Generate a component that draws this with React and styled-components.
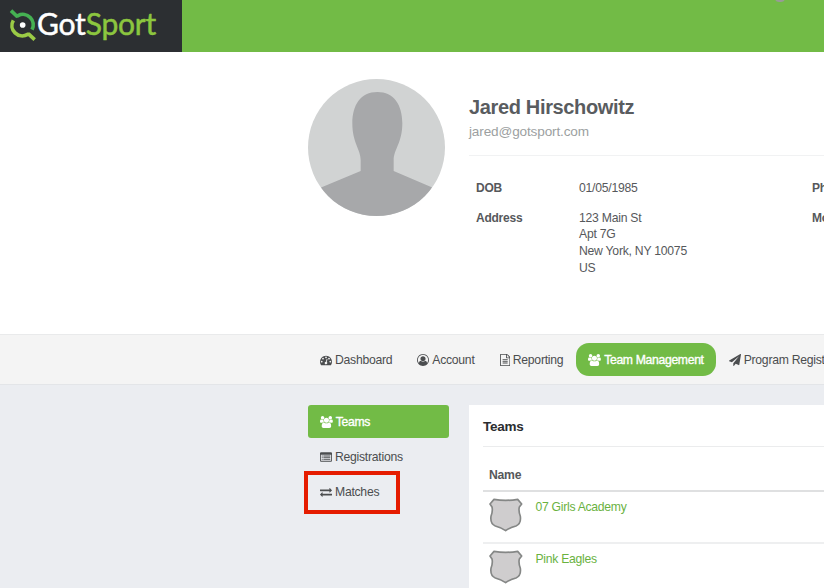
import React from 'react'
import styled, { createGlobalStyle } from 'styled-components'

const GlobalStyle = createGlobalStyle`
    *{
        box-sizing: border-box;
    }
    body{
        margin: 0;
        overflow: hidden;
        background-color: #ebedf1;
        color: #56585b;
        font-family: "Liberation Sans", Arial, sans-serif;
        font-size: 12.2px;
        letter-spacing: -0.24px;
    }
`

const Page = styled.div`
    width: 100%;
    height: 588px;
    display: flex;
    flex-direction: column;
    overflow: hidden;
`

const TopBar = styled.header`
    position: relative;
    flex: none;
    display: flex;
    height: 52px;
    background-color: #72bb46;
`

const Brand = styled.div`
    display: flex;
    align-items: center;
    width: 182px;
    padding-left: 9px;
    background-color: #2c2f32;
    svg{
        width: 28px;
        height: 34px;
    }
`

const BrandName = styled.span`
    margin-top: -7px;
    font-family: Lato, sans-serif;
    font-size: 30px;
    letter-spacing: -0.2px;
    line-height: 40px;
    white-space: nowrap;
    color: #fff;
    -webkit-text-stroke: 0.5px;
    span{
        color: #8cc63f;
    }
`

const Knob = styled.i`
    position: absolute;
    top: -3px;
    left: 775px;
    width: 10px;
    height: 5px;
    border-radius: 0 0 4px 4px;
    background-color: #989b96;
`

const Profile = styled.section`
    flex: none;
    display: flex;
    gap: 24px;
    height: 282px;
    padding: 27px 0 0 308px;
    background-color: #fff;
    overflow: hidden;
`

const Avatar = styled.svg`
    flex: none;
    width: 137px;
    height: 137px;
`

const Info = styled.div`
    flex: none;
    width: 600px;
    padding-top: 16px;
    h1{
        margin: 0;
        font-size: 20px;
        letter-spacing: -0.35px;
        line-height: 24px;
        color: #595c5f;
    }
    p{
        margin: 0;
        padding-bottom: 16px;
        border-bottom: 1px solid #f1f2f3;
        font-size: 13.6px;
        letter-spacing: -0.15px;
        line-height: 25px;
        color: #9c9fa1;
        height: 37px;
    }
`

const Details = styled.dl`
    display: grid;
    grid-template-columns: 103px 233px 100px;
    row-gap: 13px;
    margin: 0;
    padding: 24px 0 0 7px;
    line-height: 16.7px;
    dt{
        font-weight: bold;
        font-size: 12px;
    }
    dd{
        margin: 0;
        white-space: pre-line;
    }
`

const NavBar = styled.nav`
    flex: none;
    display: flex;
    gap: 1px;
    height: 51px;
    padding: 8px 0 0 308px;
    background-color: #f4f4f4;
    border-top: 1px solid #e9eaeb;
    border-bottom: 1px solid #e3e5e8;
`

const NavItem = styled.a`
    flex: none;
    display: flex;
    align-items: center;
    gap: 3px;
    height: 33px;
    padding: 0 12px;
    border-radius: 13px;
    white-space: nowrap;
    color: ${({ $active }) => $active ? '#fff' : '#4b4d4f'};
    background-color: ${({ $active }) => $active ? '#72bb46' : 'transparent'};
    -webkit-text-stroke: ${({ $active }) => $active ? '0.35px' : '0'};
    letter-spacing: ${({ $active }) => $active ? '-0.32px' : '-0.26px'};
`

const Content = styled.main`
    flex: 1;
    display: flex;
    gap: 20px;
    padding: 20px 0 0 308px;
`

const SideMenu = styled.aside`
    flex: none;
    display: flex;
    flex-direction: column;
    gap: 2px;
    width: 141px;
`

const SideItem = styled(NavItem)`
    position: relative;
    border-radius: 3px;
`

const Highlight = styled.span`
    position: absolute;
    top: -4px;
    left: -4px;
    width: 96px;
    height: 43px;
    border: 4px solid #e51c00;
`

const Card = styled.section`
    flex: 1;
    padding-left: 14px;
    background-color: #fff;
    h2{
        margin: 0;
        height: 42px;
        border-bottom: 1px solid #ebeced;
        font-size: 13.5px;
        letter-spacing: -0.25px;
        line-height: 43px;
        color: #2b2d2f;
    }
`

const TableHead = styled.div`
    height: 45px;
    padding: 20px 6px 0;
    border-bottom: 2px solid #dfe0e1;
    font-weight: bold;
    line-height: 16px;
`

const TeamRow = styled.div`
    display: flex;
    gap: 12.5px;
    height: 52px;
    padding: 6px 6px 0;
    border-bottom: 2px solid #eeeff0;
    a{
        padding-top: 1px;
        line-height: 16px;
        letter-spacing: -0.28px;
        color: #6ab23f;
    }
    svg{
        width: 34px;
        height: 34px;
    }
`

// every glyph is 1792 units high
const icons = {
    dashboard: [1792, 'M384 1152q0-53-37.5-90.5t-90.5-37.5-90.5 37.5-37.5 90.5 37.5 90.5 90.5 37.5 90.5-37.5 37.5-90.5zm192-448q0-53-37.5-90.5t-90.5-37.5-90.5 37.5-37.5 90.5 37.5 90.5 90.5 37.5 90.5-37.5 37.5-90.5zm428 481l101-382q6-26-7.5-48.5t-38.5-29.5-48 6.5-30 39.5l-101 382q-60 5-107 43.5t-63 98.5q-20 77 20 146t117 89 146-20 89-117q16-60-6-117t-72-91zm660-33q0-53-37.5-90.5t-90.5-37.5-90.5 37.5-37.5 90.5 37.5 90.5 90.5 37.5 90.5-37.5 37.5-90.5zm-640-640q0-53-37.5-90.5t-90.5-37.5-90.5 37.5-37.5 90.5 37.5 90.5 90.5 37.5 90.5-37.5 37.5-90.5zm448 192q0-53-37.5-90.5t-90.5-37.5-90.5 37.5-37.5 90.5 37.5 90.5 90.5 37.5 90.5-37.5 37.5-90.5zm320 448q0 261-141 483-19 29-54 29h-1402q-35 0-54-29-141-221-141-483 0-182 71-348t191-286 286-191 348-71 348 71 286 191 191 286 71 348z'],
    account: [1792, 'M896 0q182 0 348 71t286 191 191 286 71 348q0 181-70.5 347t-190.5 286-286 191.5-349 71.5-349-71-285.5-191.5-190.5-286-71-347.5 71-348 191-286 286-191 348-71zm619 1351q149-205 149-455 0-156-61-298t-164-245-245-164-298-61-298 61-245 164-164 245-61 298q0 250 149 455 66-327 306-327 131 128 313 128t313-128q240 0 306 327zm-235-647q0-159-112.5-271.5t-271.5-112.5-271.5 112.5-112.5 271.5 112.5 271.5 271.5 112.5 271.5-112.5 112.5-271.5z'],
    report: [1536, 'M1468 380q28 28 48 76t20 88v1152q0 40-28 68t-68 28h-1344q-40 0-68-28t-28-68v-1600q0-40 28-68t68-28h896q40 0 88 20t76 48zm-444-244v376h376q-10-29-22-41l-313-313q-12-12-41-22zm384 1528v-1024h-416q-40 0-68-28t-28-68v-416h-768v1536h1280zm-1024-864q0-14 9-23t23-9h704q14 0 23 9t9 23v64q0 14-9 23t-23 9h-704q-14 0-23-9t-9-23v-64zm736 224q14 0 23 9t9 23v64q0 14-9 23t-23 9h-704q-14 0-23-9t-9-23v-64q0-14 9-23t23-9h704zm0 256q14 0 23 9t9 23v64q0 14-9 23t-23 9h-704q-14 0-23-9t-9-23v-64q0-14 9-23t23-9h704z'],
    users: [1920, 'M593 896q-162 5-265 128h-134q-82 0-138-40.5t-56-118.5q0-353 124-353 6 0 43.5 21t97.5 42.5 119 21.5q67 0 133-23-5 37-5 66 0 139 81 256zm1071 637q0 120-73 189.5t-194 69.5h-874q-121 0-194-69.5t-73-189.5q0-53 3.5-103.5t14-109 26.5-108.5 43-97.5 62-81 85.5-53.5 111.5-20q10 0 43 21.5t73 48 107 48 135 21.5 135-21.5 107-48 73-48 43-21.5q61 0 111.5 20t85.5 53.5 62 81 43 97.5 26.5 108.5 14 109 3.5 103.5zm-1024-1277q0 106-75 181t-181 75-181-75-75-181 75-181 181-75 181 75 75 181zm704 384q0 159-112.5 271.5t-271.5 112.5-271.5-112.5-112.5-271.5 112.5-271.5 271.5-112.5 271.5 112.5 112.5 271.5zm576 225q0 78-56 118.5t-138 40.5h-134q-103-123-265-128 81-117 81-256 0-29-5-66 66 23 133 23 59 0 119-21.5t97.5-42.5 43.5-21q124 0 124 353zm-128-609q0 106-75 181t-181 75-181-75-75-181 75-181 181-75 181 75 75 181z'],
    plane: [1792, 'M1764 11q33 24 27 64l-256 1536q-5 29-32 45-14 8-31 8-11 0-24-5l-453-185-242 295q-18 23-49 23-13 0-22-4-19-7-30.5-23.5t-11.5-36.5v-349l864-1059-1069 925-395-162q-37-14-40-55-2-40 32-59l1664-960q15-9 32-9 20 0 36 11z'],
    list: [1792, 'M160 192h1472q160 0 160 160v1088q0 160-160 160h-1472q-160 0-160-160v-1088q0-160 160-160zM128 560v880q0 32 32 32h1472q32 0 32-32v-880zM256 680h150v140h-150zM500 680h1036v140h-1036zM256 930h150v140h-150zM500 930h1036v140h-1036zM256 1180h150v140h-150zM500 1180h1036v140h-1036z'],
    exchange: [1792, 'M1792 1184v192q0 13-9.5 22.5t-22.5 9.5h-1376v192q0 13-9.5 22.5t-22.5 9.5q-12 0-24-10l-319-320q-9-9-9-22 0-14 9-23l320-320q9-9 23-9 13 0 22.5 9.5t9.5 22.5v192h1376q13 0 22.5 9.5t9.5 22.5zm0-544q0 14-9 23l-320 320q-9 9-23 9-13 0-22.5-9.5t-9.5-22.5v-192h-1376q-13 0-22.5-9.5t-9.5-22.5v-192q0-13 9.5-22.5t22.5-9.5h1376v-192q0-14 9-23t23-9q12 0 24 10l319 319q9 9 9 23z'],
}

const Icon = ({name}) => {
    const [width, path] = icons[name]
    return <svg width={width * 12 / 1792} height="12" viewBox={`0 0 ${width} 1792`}>
        <path fill="currentColor" fillRule="evenodd" d={path}/>
    </svg>
}

const Shield = () => {
    return <svg viewBox="87 308 102 102">
        <path
            d="M102 312Q137 318 173 312L185 326L178 335Q175 346 181 363Q184 385 168 392Q149 397 137 406Q125 397 106 392Q90 385 93 363Q99 346 96 335L90 326Z"
            fill="#cfcdce" stroke="#858786" strokeWidth="5" strokeLinejoin="round"/>
    </svg>
}

const nav = [
    {icon: 'dashboard', label: 'Dashboard'},
    {icon: 'account', label: 'Account'},
    {icon: 'report', label: 'Reporting'},
    {icon: 'users', label: 'Team Management', active: true},
    {icon: 'plane', label: 'Program Registrations'},
]

const side = [
    {icon: 'users', label: 'Teams', active: true},
    {icon: 'list', label: 'Registrations'},
    {icon: 'exchange', label: 'Matches', marked: true},
]

const teams = ['07 Girls Academy', 'Pink Eagles']

const App = () => {
    return <Page>
        <GlobalStyle/>
        <TopBar>
            <Brand>
                <svg viewBox="27 25 84 102" fill="none" strokeWidth="11">
                    <path d="M33 30L50 46L54 45A31 31 0 0 1 96 87" stroke="#45b052"/>
                    <path d="M40 59A31 31 0 0 0 83 101L87 101L104 117" stroke="#9bcb46"/>
                    <circle cx="68" cy="73" r="8.500" fill="#fff"/>
                </svg>
                <BrandName>Got<span>Sport</span></BrandName>
            </Brand>
            <Knob/>
        </TopBar>
        <Profile>
            <Avatar viewBox="0 0 411 411">
                <clipPath id="round"><circle cx="205.500" cy="205.500" r="205.500"/></clipPath>
                <g clipPath="url(#round)">
                    <path fill="#d1d3d3" d="M0 0H411V411H0Z"/>
                    <path fill="#a7a8aa" d="M208 39C258 39 283 78 283 133C283 192 257 211 257 244V276L371 325L411 345V411H0V345L41 325L158 276V244C158 211 133 192 133 133C133 78 158 39 208 39Z"/>
                </g>
            </Avatar>
            <Info>
                <h1>Jared Hirschowitz</h1>
                <p>jared@gotsport.com</p>
                <Details>
                    <dt>DOB</dt>
                    <dd>01/05/1985</dd>
                    <dt>Phone</dt>
                    <dt>Address</dt>
                    <dd>{'123 Main St\nApt 7G\nNew York, NY 10075\nUS'}</dd>
                    <dt>Mobile</dt>
                </Details>
            </Info>
        </Profile>
        <NavBar>
            {nav.map(item => <NavItem key={item.label} $active={item.active}>
                <Icon name={item.icon}/>{item.label}
            </NavItem>)}
        </NavBar>
        <Content>
            <SideMenu>
                {side.map(item => <SideItem key={item.label} $active={item.active}>
                    <Icon name={item.icon}/>{item.label}
                    {item.marked && <Highlight/>}
                </SideItem>)}
            </SideMenu>
            <Card>
                <h2>Teams</h2>
                <TableHead>Name</TableHead>
                {teams.map(team => <TeamRow key={team}>
                    <Shield/>
                    <a>{team}</a>
                </TeamRow>)}
            </Card>
        </Content>
    </Page>
}

export default App
